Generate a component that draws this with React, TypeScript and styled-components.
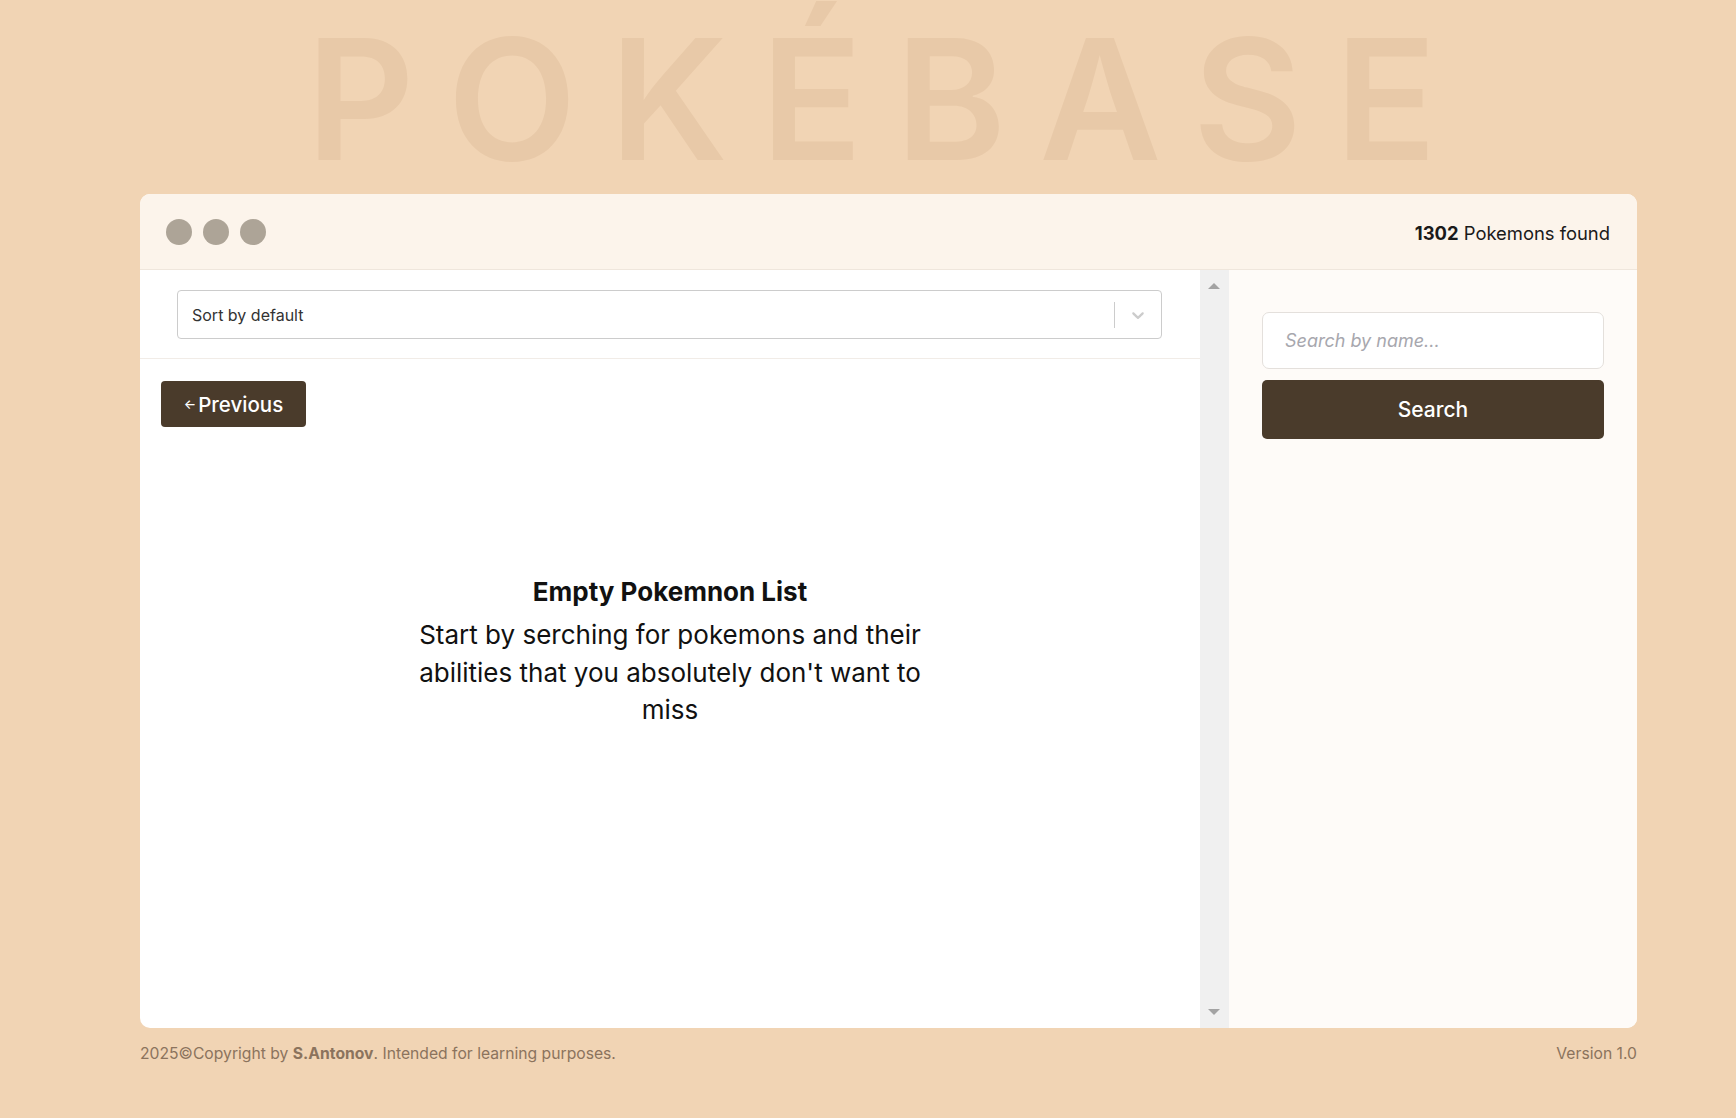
import styled, { createGlobalStyle } from "styled-components";

const GlobalStyle = createGlobalStyle`
  * {
    box-sizing: border-box;
  }
  html,
  body {
    margin: 0;
    padding: 0;
    background-color: #f1d4b4;
    font-family: Inter, "Noto Sans", sans-serif;
    color: #111;
  }
`;

const Page = styled.div`
  min-height: 100vh;
  overflow: hidden;
  display: flex;
  flex-direction: column;
`;

const BigTitle = styled.h1`
  margin: 0;
  height: 194px;
  padding-left: 40px;
  font-size: 168px;
  font-weight: 600;
  line-height: 198px;
  letter-spacing: 33px;
  text-align: center;
  color: #e8c9a8;
  user-select: none;
`;

const Shell = styled.div`
  margin-left: 140px;
  width: 1497px;
`;

const Window = styled.div`
  height: 834px;
  border-radius: 10px;
  overflow: hidden;
  background-color: #fff;
  display: flex;
  flex-direction: column;
`;

const TopBar = styled.div`
  height: 76px;
  flex-shrink: 0;
  display: flex;
  align-items: center;
  justify-content: space-between;
  padding: 0 27px 0 26px;
  background-color: #fcf4eb;
  border-bottom: 1px solid #efe6dc;
`;

const Dots = styled.div`
  display: flex;
  gap: 11px;
`;

const Dot = styled.span`
  width: 26px;
  height: 26px;
  border-radius: 50%;
  background-color: #ada497;
`;

const Count = styled.p`
  margin: 3px 0 0;
  font-size: 18.4px;
  color: #1a1a1a;
  b {
    font-weight: 700;
  }
`;

const Body = styled.div`
  flex: 1;
  display: flex;
  min-height: 0;
`;

const ListPane = styled.div`
  flex: 1;
  display: flex;
  flex-direction: column;
`;

const SortBar = styled.div`
  padding: 20px 38px 19px 37px;
  border-bottom: 1px solid #f1ece7;
`;

const Select = styled.div`
  height: 49px;
  display: flex;
  align-items: center;
  border: 1px solid #cccccc;
  border-radius: 4px;
  background-color: #fff;
  padding-left: 14px;
  font-size: 16px;
  color: #333;
`;

const SelectValue = styled.span`
  flex: 1;
`;

const Separator = styled.span`
  width: 1px;
  height: 26px;
  background-color: #cccccc;
`;

const Chevron = styled.span`
  width: 46px;
  display: flex;
  justify-content: center;
  color: #cccccc;
`;

const PrevButton = styled.button`
  align-self: flex-start;
  margin: 22px 0 0 21px;
  width: 145px;
  height: 46px;
  border: none;
  border-radius: 4px;
  background-color: #4a3b2b;
  color: #fff;
  font-family: inherit;
  font-size: 20.5px;
  font-weight: 500;
  display: flex;
  align-items: center;
  justify-content: center;
  gap: 2px;
  span {
    font-size: 13px;
  }
`;

const Empty = styled.div`
  margin: 149px auto 0;
  max-width: 530px;
  text-align: center;
`;

const EmptyTitle = styled.h2`
  margin: 0 0 8px;
  font-size: 26px;
  font-weight: 700;
  line-height: 32px;
`;

const EmptyText = styled.p`
  margin: 0;
  font-size: 26px;
  line-height: 37.5px;
`;

const ScrollTrack = styled.div`
  width: 29px;
  background-color: #f0f0f0;
  display: flex;
  flex-direction: column;
  justify-content: space-between;
  align-items: center;
  padding: 13px 0 13px 0;
`;

const Arrow = styled.span<{ $down?: boolean }>`
  width: 0;
  height: 0;
  margin-right: 1px;
  border-left: 6px solid transparent;
  border-right: 6px solid transparent;
  ${(p) =>
    p.$down
      ? "border-top: 6px solid #a3a3a3;"
      : "border-bottom: 6px solid #a3a3a3;"}
`;

const SidePane = styled.div`
  width: 408px;
  background-color: #fefbf8;
  padding: 42px 33px 0;
  display: flex;
  flex-direction: column;
  gap: 11px;
`;

const SearchInput = styled.input`
  height: 57px;
  border: 1px solid #e4e0dc;
  border-radius: 7px;
  padding: 0 22px;
  font-family: inherit;
  font-size: 18px;
  background-color: #fff;
  outline: none;
  &::placeholder {
    color: #a7a7ae;
    font-style: italic;
  }
`;

const SearchButton = styled.button`
  height: 59px;
  border: none;
  border-radius: 5px;
  background-color: #4a3b2b;
  color: #fff;
  font-family: inherit;
  font-size: 21px;
  font-weight: 500;
`;

const Footer = styled.footer`
  display: flex;
  justify-content: space-between;
  padding-top: 16px;
  font-size: 15.7px;
  color: #8b735d;
  b {
    font-weight: 700;
  }
`;

export default function App() {
  return (
    <Page>
      <GlobalStyle />
      <BigTitle>POKÉBASE</BigTitle>
      <Shell>
        <Window>
          <TopBar>
            <Dots>
              <Dot />
              <Dot />
              <Dot />
            </Dots>
            <Count>
              <b>1302</b> Pokemons found
            </Count>
          </TopBar>
          <Body>
            <ListPane>
              <SortBar>
                <Select>
                  <SelectValue>Sort by default</SelectValue>
                  <Separator />
                  <Chevron>
                    <svg width="20" height="20" viewBox="0 0 20 20" fill="currentColor">
                      <path d="M4.516 7.548c0.436-0.446 1.043-0.481 1.576 0l3.908 3.747 3.908-3.747c0.533-0.481 1.141-0.446 1.574 0 0.436 0.445 0.408 1.197 0 1.615-0.406 0.418-4.695 4.502-4.695 4.502-0.217 0.223-0.502 0.335-0.787 0.335s-0.57-0.112-0.789-0.335c0 0-4.287-4.084-4.695-4.502s-0.436-1.170 0-1.615z" />
                    </svg>
                  </Chevron>
                </Select>
              </SortBar>
              <PrevButton>
                <span>←</span>Previous
              </PrevButton>
              <Empty>
                <EmptyTitle>Empty Pokemnon List</EmptyTitle>
                <EmptyText>
                  Start by serching for pokemons and their abilities that you
                  absolutely don't want to miss
                </EmptyText>
              </Empty>
            </ListPane>
            <ScrollTrack>
              <Arrow />
              <Arrow $down />
            </ScrollTrack>
            <SidePane>
              <SearchInput placeholder="Search by name..." />
              <SearchButton>Search</SearchButton>
            </SidePane>
          </Body>
        </Window>
        <Footer>
          <span>
            2025©Copyright by <b>S.Antonov</b>. Intended for learning purposes.
          </span>
          <span>Version 1.0</span>
        </Footer>
      </Shell>
    </Page>
  );
}
